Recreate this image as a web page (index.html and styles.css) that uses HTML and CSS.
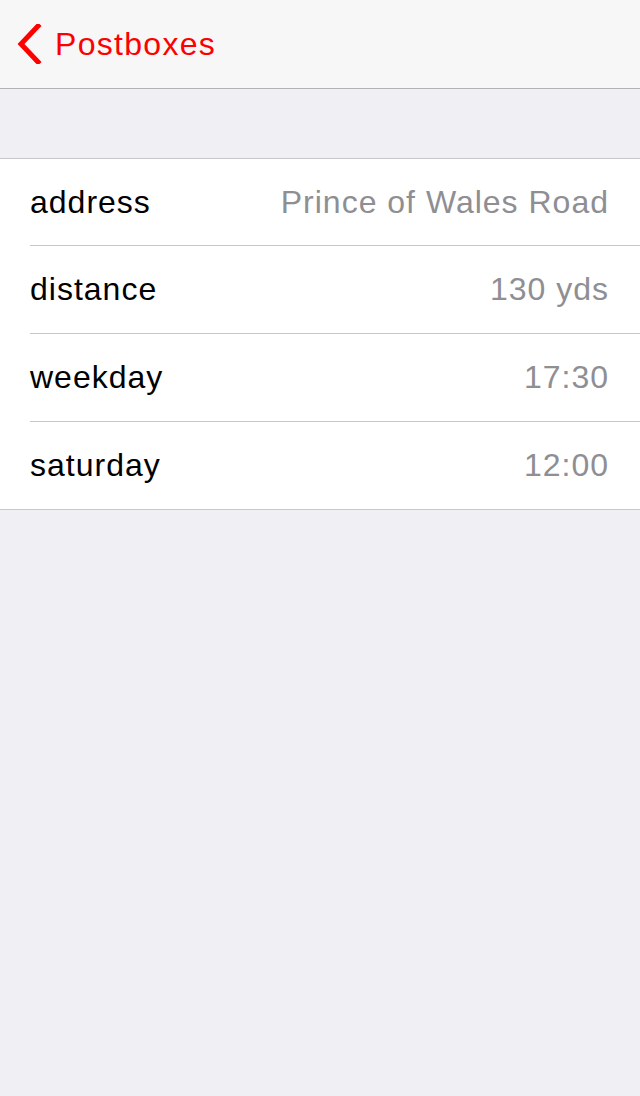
FILE: index.html
```html
<!DOCTYPE html>
<html>
<head>
<meta charset="utf-8">
<link rel="stylesheet" href="styles.css">
</head>
<body>
<header class="nav">
  <a class="back">
    <svg class="chev" width="26" height="40" viewBox="0 0 26 40"><path d="M22 2 L5 20 L22 38" fill="none" stroke="#ff0000" stroke-width="5" stroke-linecap="square"/></svg>
    <span class="back-label">Postboxes</span>
  </a>
</header>
<main class="content">
  <ul class="group">
    <li class="row"><span class="key">address</span><span class="val">Prince of Wales Road</span></li>
    <li class="row"><span class="key">distance</span><span class="val">130 yds</span></li>
    <li class="row"><span class="key">weekday</span><span class="val">17:30</span></li>
    <li class="row"><span class="key">saturday</span><span class="val">12:00</span></li>
  </ul>
</main>
</body>
</html>
```
FILE: styles.css
```css
html, body {
  margin: 0;
  padding: 0;
  height: 100%;
}
body {
  background: #efeff4;
  font-family: "Liberation Sans", Arial, sans-serif;
  font-size: 32px;
}
.nav {
  background: #f7f7f7;
  border-bottom: 1px solid #b2b2b2;
  display: flex;
  align-items: center;
  padding-left: 16px;
  box-sizing: border-box;
  height: 89px;
}
.back {
  display: flex;
  align-items: center;
  color: #ff0000;
  gap: 13px;
}
.chev { display: block; }
.back-label { font-size: 32px; line-height: 40px; letter-spacing: 1.3px; }
.content {
  padding-top: 69px;
}
.group {
  list-style: none;
  margin: 0;
  padding: 0;
  background: #fff;
  border-top: 1px solid #c8c7cc;
  border-bottom: 1px solid #c8c7cc;
}
.row {
  height: 87px;
  display: flex;
  align-items: center;
  justify-content: space-between;
  margin-left: 30px;
  padding-right: 31px;
  border-bottom: 1px solid #c8c7cc;
  letter-spacing: 1px;
}
.row:first-child { height: 86px; }
.row:last-child { border-bottom: none; }
.key { color: #000; }
.val { color: #8e8e93; }
```
